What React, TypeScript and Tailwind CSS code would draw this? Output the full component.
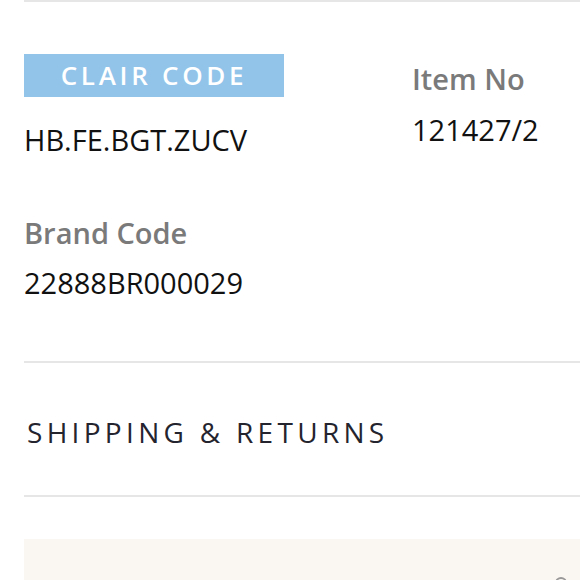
export default function App() {
  return (
    <div className="w-[580px] h-[580px] overflow-hidden bg-white font-['Open_Sans',sans-serif]">
      <div className="ml-6 border-t-2 border-[#e6e6e6]">
        <div className="grid grid-cols-[388px_1fr] pt-[52px]">
          <div>
            <div className="flex h-[43px] w-[260px] items-center justify-center bg-[#92c4ea] text-[26px] font-semibold tracking-[3.7px] text-white">
              CLAIR CODE
            </div>
            <div className="mt-[24px] text-[29px] leading-[38px] text-[#111]">HB.FE.BGT.ZUCV</div>
            <div className="mt-[55px] text-[29px] font-semibold leading-[38px] text-[#7a7a7a]">Brand Code</div>
            <div className="mt-[12px] text-[29px] leading-[38px] text-[#111]">22888BR000029</div>
          </div>
          <div>
            <div className="mt-[6px] text-[29px] font-semibold leading-[38px] text-[#7a7a7a]">Item No</div>
            <div className="mt-[13px] text-[29px] leading-[38px] text-[#111]">121427/2</div>
          </div>
        </div>
        <div className="mt-[59px] border-t-2 border-[#e6e6e6] pb-[44px] pt-[50px]">
          <div className="pl-[3px] text-[28px] leading-[38px] tracking-[4.3px] text-[#24242e]">SHIPPING &amp; RETURNS</div>
        </div>
        <div className="border-t-2 border-[#e6e6e6]" />
        <div className="relative mt-[42px] h-[60px] bg-[#faf6f1]">
          <div className="absolute left-[531px] top-[38px] h-[12px] w-[12px] rounded-full border-2 border-[#999]" />
        </div>
      </div>
    </div>
  );
}
